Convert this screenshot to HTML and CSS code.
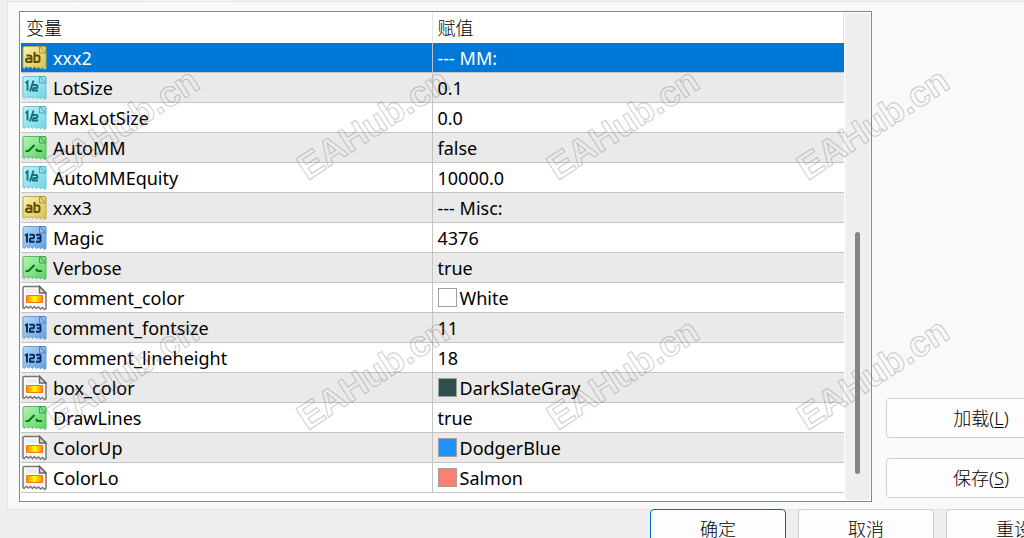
FILE: index.html
```html
<!DOCTYPE html>
<html lang="zh-CN">
<head>
  <meta charset="UTF-8" />
  <title>变量</title>
  <link rel="stylesheet" href="styles.css">
</head>
<body>
  <!-- Icônes des types de variables -->
  <svg class="sprite" width="0" height="0" aria-hidden="true">
    <defs>
      <linearGradient id="gYellow" x2="1" y2="1"><stop offset="0" stop-color="#fbf3ae"/><stop offset="1" stop-color="#d8c04c"/></linearGradient>
      <linearGradient id="gCyan" x2="1" y2="1"><stop offset="0" stop-color="#bcf4fb"/><stop offset="1" stop-color="#6ed2e4"/></linearGradient>
      <linearGradient id="gGreen" x2="1" y2="1"><stop offset="0" stop-color="#b4f5b4"/><stop offset="1" stop-color="#57d163"/></linearGradient>
      <linearGradient id="gBlue" x2="1" y2="1"><stop offset="0" stop-color="#b4dafa"/><stop offset="1" stop-color="#609fe0"/></linearGradient>
      <linearGradient id="gColor"><stop offset="0" stop-color="#ff8400"/><stop offset=".35" stop-color="#ffd800"/><stop offset=".5" stop-color="#ffff10"/><stop offset=".65" stop-color="#ffd800"/><stop offset="1" stop-color="#ff8400"/></linearGradient>
      <path id="sheet" d="M2.500 1.500H17.500L24 8V23.500l-1.500 1-2-2-2 1.500-2-2-2 1.500-2-2-2 2-2-2-2 1.500-2-1.500-2.500 2-1-1V3Q1 1.500 2.500 1.500z"/>
      <g id="corner"><path d="M17.500 1.500H23q1 0 1 1V8h-6.500z"/><path d="M18 2l5.500 5.500"/></g>
      <symbol id="string" viewBox="0 0 25 26">
        <use href="#sheet" fill="url(#gYellow)" stroke="#bda74a"/>
        <use href="#corner" fill="#e3d36c" stroke="#a9933b"/>
        <g fill="none" stroke="#5e4c08" stroke-width="2"><path d="M4.500 10.500h3q2 0 2 2v5M9.500 13.500H6q-2 0-2 1.700T6 17h3.500M12.500 7v10h3q2 0 2-2v-2.500q0-2-2-2h-3"/></g>
      </symbol>
      <symbol id="double" viewBox="0 0 25 26">
        <use href="#sheet" fill="url(#gCyan)" stroke="#6fc3d2"/>
        <use href="#corner" fill="#8fe0ec" stroke="#4fa9bb"/>
        <g fill="none" stroke="#14717f" stroke-width="1.900"><path d="M3.500 8l2-1.500v9M11.500 5.500l-3.500 11M10.500 10H14q1.500 0 1.500 1v1q0 1-1 1h-2q-1.500 0-1.500 1v1.500h5"/></g>
      </symbol>
      <symbol id="bool" viewBox="0 0 25 26">
        <use href="#sheet" fill="url(#gGreen)" stroke="#52b95e"/>
        <use href="#corner" fill="#7fdf86" stroke="#36a349"/>
        <path d="M3.500 16h3l6-6M14 14l1.500 2H20" fill="none" stroke="#087a16" stroke-width="2.200"/>
      </symbol>
      <symbol id="int" viewBox="0 0 25 26">
        <use href="#sheet" fill="url(#gBlue)" stroke="#6b9fd3"/>
        <use href="#corner" fill="#8abcee" stroke="#4b82bd"/>
        <path d="M3 10.500l2-1v8M7.500 9.800H11q1 0 1 1v1.500q0 1-1 1H9q-1 0-1 1v2.400h4.500M14 9.800h3.500q1 0 1 1v5q0 1-1 1H14M15 13.300h3" fill="none" stroke="#0d2d5c" stroke-width="2"/>
      </symbol>
      <symbol id="color" viewBox="0 0 25 26">
        <use href="#sheet" fill="#fafafa" stroke="#777" stroke-width="1.500"/>
        <path d="M4 4h11v4H4z" fill="#eee"/>
        <path d="M17.500 1.500V8H24z" fill="#ddd" stroke="#666" stroke-width="1.500"/>
        <path d="M4.500 10.500h16v7h-16z" fill="url(#gColor)" stroke="#ff7410"/>
      </symbol>
    </defs>
  </svg>

  <div class="tabs"><span class="tab"></span><span class="tab"></span><span class="tab current"></span></div>

  <main class="panel">
    <div class="grid">
      <table class="vars">
        <thead>
          <tr><th>变量</th><th>赋值</th></tr>
        </thead>
        <tbody id="rows"></tbody>
      </table>
      <div class="scroll"><div class="thumb"></div></div>
    </div>
    <div class="side">
      <button type="button">加载(<u>L</u>)</button>
      <button type="button">保存(<u>S</u>)</button>
    </div>
  </main>

  <footer class="actions">
    <button type="button" class="ok">确定</button>
    <button type="button">取消</button>
    <button type="button">重设</button>
  </footer>

  <div class="watermark" aria-hidden="true">
    <span>EAHub.cn</span><span>EAHub.cn</span><span>EAHub.cn</span><span>EAHub.cn</span>
    <span>EAHub.cn</span><span>EAHub.cn</span><span>EAHub.cn</span><span>EAHub.cn</span>
  </div>

  <script src="script.js"></script>
</body>
</html>
```
FILE: styles.css
```css
* {
  box-sizing: border-box;
}

body {
  margin: 0;
  height: 100vh;
  overflow: hidden;
  position: relative;
  background: #efefef;
  color: #000;
  font-family: "Noto Sans", "Noto Sans CJK SC", sans-serif;
  font-size: 18px;
}

.sprite {
  position: absolute;
}

.tabs {
  display: flex;
  height: 1px;
  padding-left: 8px;
}

.tab {
  width: 66px;
  background: #f3f3f3;
  border-left: 1px solid #e0e0e0;
}

.tab.current {
  width: 88px;
  background: #f9f9f9;
}

.panel {
  display: flex;
  gap: 14px;
  margin-left: 7px;
  padding: 9px 0 7px 11px;
  border: 1px solid #e4e4e4;
  border-right: none;
  background: #f9f9f9;
}

.grid {
  flex: 1;
  display: flex;
  gap: 1px;
  padding: 1px 1px 8px;
  border: 1px solid #828790;
  background: #fff;
}

.vars {
  flex: 1;
  width: 100%;
  border-collapse: separate;
  border-spacing: 0;
  table-layout: fixed;
}

th, td {
  height: 30px;
  padding: 0 0 0 5px;
  line-height: 28px;
  text-align: left;
  font-weight: normal;
  white-space: nowrap;
}

th {
  border-right: 1px solid #e5e5e5;
  font-weight: 300;
}

td {
  border-bottom: 1px solid #c4c4c4;
}

td:first-child {
  padding-left: 1px;
  border-right: 1px solid #c4c4c4;
}

tbody tr:nth-child(even) {
  background: #eaeaea;
}

tbody tr.selected {
  background: #0078d7;
  color: #fff;
}

.cell {
  display: flex;
  align-items: center;
  height: 29px;
}

.icon {
  width: 25px;
  height: 26px;
  margin-right: 6px;
}

.swatch {
  width: 19px;
  height: 19px;
  margin-right: 3px;
  border: 1px solid #a0a0a0;
}

.scroll {
  width: 25px;
  margin-bottom: -7px;
  padding: 219px 10px 26px;
  background: #efefef;
}

.thumb {
  height: 100%;
  border-radius: 3px;
  background: #858585;
}

.side {
  display: flex;
  flex-direction: column;
  justify-content: flex-end;
  gap: 20px;
  width: 190px;
  margin-right: -52px;
  padding-bottom: 4px;
}

button {
  height: 40px;
  padding: 0 0 2px;
  border: 1px solid #d0d0d0;
  border-radius: 4px;
  background: #fdfdfd;
  color: #000;
  font-family: inherit;
  font-size: 18px;
  font-weight: 300;
}

u {
  text-underline-offset: 2px;
}

.actions {
  display: flex;
  justify-content: flex-end;
  gap: 12px;
  margin-top: -1px;
  margin-right: -58px;
}

.actions button {
  width: 136px;
}

.actions .ok {
  border-color: #0067c0;
}

/* Filigrane par-dessus toute la fenêtre */
.watermark {
  position: absolute;
  top: -1px;
  left: -2px;
  display: grid;
  grid-template-columns: repeat(4, 250px);
  grid-auto-rows: 250px;
  place-items: center;
  pointer-events: none;
}

.watermark span {
  transform: rotate(-33deg);
  font: bold 36px "Liberation Sans", Arial, sans-serif;
  color: transparent;
  -webkit-text-stroke: 1px rgba(120, 120, 120, 0.4);
}
```
FILE: script.js
```js
const variables = [
  ["string", "xxx2", "--- MM:"],
  ["double", "LotSize", "0.1"],
  ["double", "MaxLotSize", "0.0"],
  ["bool", "AutoMM", "false"],
  ["double", "AutoMMEquity", "10000.0"],
  ["string", "xxx3", "--- Misc:"],
  ["int", "Magic", "4376"],
  ["bool", "Verbose", "true"],
  ["color", "comment_color", "White"],
  ["int", "comment_fontsize", "11"],
  ["int", "comment_lineheight", "18"],
  ["color", "box_color", "DarkSlateGray"],
  ["bool", "DrawLines", "true"],
  ["color", "ColorUp", "DodgerBlue"],
  ["color", "ColorLo", "Salmon"]
];

// Remplir le tableau
document.getElementById("rows").innerHTML = variables.map(([type, name, value], i) => {
  const swatch = type === "color" ? `<span class="swatch" style="background:${value}"></span>` : "";
  return `<tr class="${i === 0 ? "selected" : ""}">
    <td><div class="cell"><svg class="icon"><use href="#${type}"/></svg>${name}</div></td>
    <td><div class="cell">${swatch}${value}</div></td>
  </tr>`;
}).join("");
```
